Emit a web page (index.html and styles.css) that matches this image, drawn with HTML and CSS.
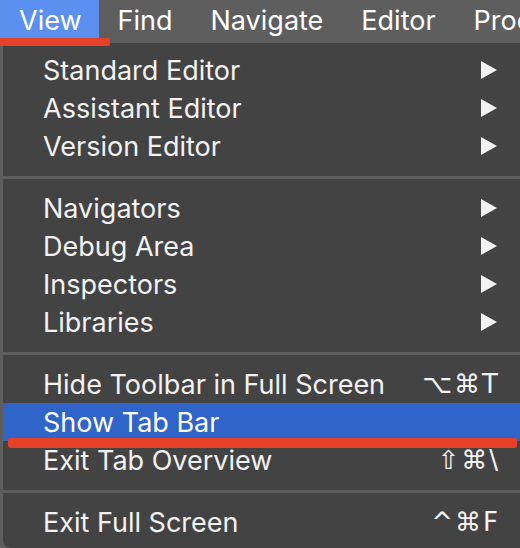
FILE: index.html
```html
<!DOCTYPE html>
<html>
<head>
<meta charset="utf-8">
<link rel="stylesheet" href="styles.css">
</head>
<body>
<div class="screen">
  <div class="menubar">
    <div class="bar-item active">View</div>
    <div class="bar-item">Find</div>
    <div class="bar-item">Navigate</div>
    <div class="bar-item">Editor</div>
    <div class="bar-item">Product</div>
    <div class="mark mark-top"></div>
  </div>
  <div class="menu">
    <div class="group">
      <div class="row"><span class="label">Standard Editor</span><svg class="arrow" viewBox="0 0 16 18"><polygon points="0,0 16,9 0,18"/></svg></div>
      <div class="row"><span class="label">Assistant Editor</span><svg class="arrow" viewBox="0 0 16 18"><polygon points="0,0 16,9 0,18"/></svg></div>
      <div class="row"><span class="label">Version Editor</span><svg class="arrow" viewBox="0 0 16 18"><polygon points="0,0 16,9 0,18"/></svg></div>
    </div>
    <div class="sep"></div>
    <div class="group">
      <div class="row"><span class="label">Navigators</span><svg class="arrow" viewBox="0 0 16 18"><polygon points="0,0 16,9 0,18"/></svg></div>
      <div class="row"><span class="label">Debug Area</span><svg class="arrow" viewBox="0 0 16 18"><polygon points="0,0 16,9 0,18"/></svg></div>
      <div class="row"><span class="label">Inspectors</span><svg class="arrow" viewBox="0 0 16 18"><polygon points="0,0 16,9 0,18"/></svg></div>
      <div class="row"><span class="label">Libraries</span><svg class="arrow" viewBox="0 0 16 18"><polygon points="0,0 16,9 0,18"/></svg></div>
    </div>
    <div class="sep"></div>
    <div class="group">
      <div class="row"><span class="label">Hide Toolbar in Full Screen</span><span class="key">⌥⌘T</span></div>
      <div class="row selected"><span class="label">Show Tab Bar</span><div class="mark mark-row"></div></div>
      <div class="row"><span class="label">Exit Tab Overview</span><span class="key">⇧⌘\</span></div>
    </div>
    <div class="sep"></div>
    <div class="group">
      <div class="row"><span class="label">Exit Full Screen</span><span class="key">^⌘F</span></div>
    </div>
  </div>
</div>
</body>
</html>
```
FILE: styles.css
```css
html, body {
  margin: 0;
  padding: 0;
  background: #5d5d5d;
}
.screen {
  width: 520px;
  height: 548px;
  overflow: hidden;
  font-family: "Inter", "Noto Sans", sans-serif;
  color: #f2f2f2;
  background: #5d5d5d;
}
.menubar {
  position: relative;
  height: 43px;
  display: flex;
  align-items: flex-start;
  background: #5e5e5e;
  white-space: nowrap;
}
.bar-item {
  height: 38px;
  line-height: 42px;
  font-size: 27px;
  padding: 0 19px;
  color: #ffffff;
}
.bar-item.active {
  background: #5b8ff0;
  padding: 0 17px 0 19px;
}
.mark {
  position: absolute;
  background: #e4402a;
}
.mark-top {
  left: 0;
  top: 38px;
  width: 110px;
  height: 8px;
  border-radius: 0 2px 2px 0;
}
.menu {
  background: #444344;
  margin-left: 3px;
  padding: 8px 0 4px;
  height: 493px;
  border-radius: 0 0 0 8px;
}
.row {
  position: relative;
  height: 38px;
  display: flex;
  align-items: center;
  justify-content: space-between;
  padding: 0 20px 0 40px;
  font-size: 27px;
}
.row.selected {
  background: #2f64c9;
  color: #ffffff;
}
.mark-row {
  left: 5px;
  right: 3px;
  top: 35px;
  height: 10px;
  border-radius: 2px;
}
.arrow {
  width: 16px;
  height: 18px;
  fill: #f2f2f2;
  margin-right: 3px;
}
.key {
  font-family: "DejaVu Sans", sans-serif;
  font-size: 26px;
  letter-spacing: 2px;
}
.sep {
  height: 24px;
  display: flex;
  align-items: center;
}
.sep::before {
  content: "";
  display: block;
  width: 100%;
  height: 3px;
  background: #5e5d5e;
}
```
